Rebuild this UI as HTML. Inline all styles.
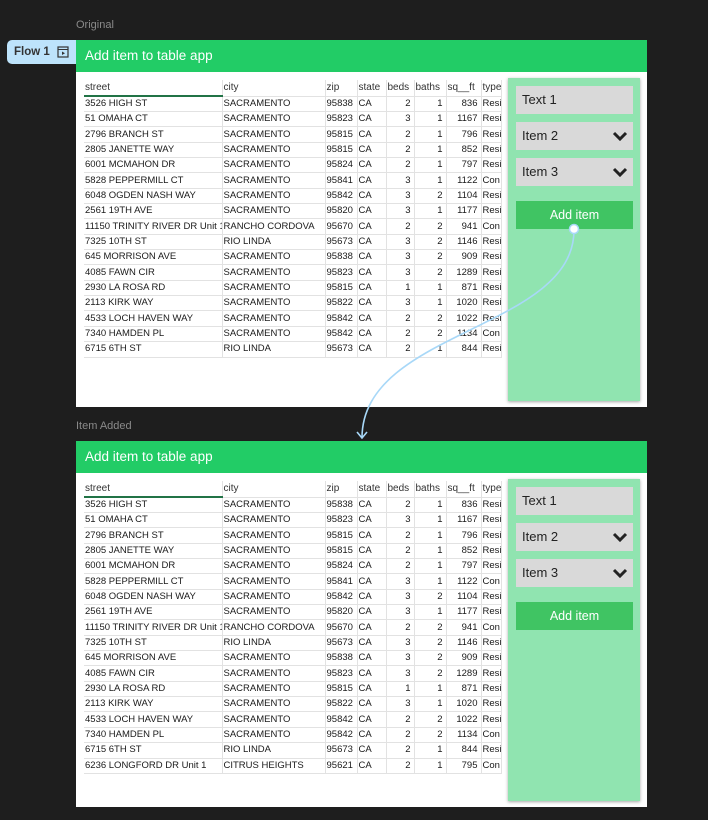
<!DOCTYPE html>
<html><head><meta charset="utf-8"><style>
*{margin:0;padding:0;box-sizing:border-box}
body{width:708px;height:820px;background:#1e1e1e;position:relative;overflow:hidden;font-family:"Liberation Sans",sans-serif}
.lbl{position:absolute;left:76px;font-size:11px;color:#8a8a8a}
.frame{position:absolute;left:76px;width:571px;background:#fff}
.hdr{height:32px;background:#22cc66;color:#fff;font-size:13.5px;line-height:32px;padding-left:9px}
table{position:absolute;left:8px;width:417px;border-collapse:collapse;table-layout:fixed;font-size:9.5px;color:#1a1a1a;font-family:"Liberation Sans",sans-serif}
td{height:15.35px;border-right:1px solid #e2e2e2;border-bottom:1px solid #e2e2e2;white-space:nowrap;overflow:hidden;padding:0 1px;line-height:14px}
tr.h td{height:16px;color:#333;font-size:10px}
td.n{text-align:right;padding-right:3px}
.panel{position:absolute;left:432px;width:132px;background:#90e4b0;box-shadow:0 1px 3px rgba(0,0,0,.35)}
.f{position:absolute;left:8px;width:117px;height:28px;background:#d9d9d9;font-size:13px;color:#222;line-height:28px;padding-left:6px}
.f svg{position:absolute;right:5px;top:9px}
.btn{position:absolute;left:8px;width:117px;height:28px;background:#40c463;color:#fff;font-size:12.5px;line-height:28px;text-align:center}
.flow{position:absolute;left:7px;top:40px;width:69px;height:24px;background:#bde3fb;border-radius:5px 0 0 5px;font-size:11.5px;font-weight:bold;color:#333;line-height:24px;padding-left:7px}
</style></head><body>
<div class="lbl" style="top:19px">Original</div>
<div class="flow">Flow 1<svg style="position:absolute;left:50px;top:6px" width="12" height="12" viewBox="0 0 12 12"><rect x="1" y="1" width="10" height="10" fill="none" stroke="#333" stroke-width="1.2"/><line x1="1" y1="3.5" x2="11" y2="3.5" stroke="#333"/><path d="M5 5.5v3.5l3-1.75z" fill="#333"/></svg></div>

<div class="frame" style="top:40px;height:367px">
<div class="hdr">Add item to table app</div>
<table style="top:40px">
<colgroup><col style="width:138px"><col style="width:103px"><col style="width:32px"><col style="width:29px"><col style="width:28px"><col style="width:32px"><col style="width:35px"><col style="width:20px"></colgroup>
<tr class="h"><td style="border-bottom:2px solid #217346">street</td><td>city</td><td>zip</td><td>state</td><td>beds</td><td>baths</td><td>sq__ft</td><td>type</td></tr>
<tr><td>3526 HIGH ST</td><td>SACRAMENTO</td><td>95838</td><td>CA</td><td class="n">2</td><td class="n">1</td><td class="n">836</td><td>Resi</td></tr>
<tr><td>51 OMAHA CT</td><td>SACRAMENTO</td><td>95823</td><td>CA</td><td class="n">3</td><td class="n">1</td><td class="n">1167</td><td>Resi</td></tr>
<tr><td>2796 BRANCH ST</td><td>SACRAMENTO</td><td>95815</td><td>CA</td><td class="n">2</td><td class="n">1</td><td class="n">796</td><td>Resi</td></tr>
<tr><td>2805 JANETTE WAY</td><td>SACRAMENTO</td><td>95815</td><td>CA</td><td class="n">2</td><td class="n">1</td><td class="n">852</td><td>Resi</td></tr>
<tr><td>6001 MCMAHON DR</td><td>SACRAMENTO</td><td>95824</td><td>CA</td><td class="n">2</td><td class="n">1</td><td class="n">797</td><td>Resi</td></tr>
<tr><td>5828 PEPPERMILL CT</td><td>SACRAMENTO</td><td>95841</td><td>CA</td><td class="n">3</td><td class="n">1</td><td class="n">1122</td><td>Con</td></tr>
<tr><td>6048 OGDEN NASH WAY</td><td>SACRAMENTO</td><td>95842</td><td>CA</td><td class="n">3</td><td class="n">2</td><td class="n">1104</td><td>Resi</td></tr>
<tr><td>2561 19TH AVE</td><td>SACRAMENTO</td><td>95820</td><td>CA</td><td class="n">3</td><td class="n">1</td><td class="n">1177</td><td>Resi</td></tr>
<tr><td>11150 TRINITY RIVER DR Unit 114</td><td>RANCHO CORDOVA</td><td>95670</td><td>CA</td><td class="n">2</td><td class="n">2</td><td class="n">941</td><td>Con</td></tr>
<tr><td>7325 10TH ST</td><td>RIO LINDA</td><td>95673</td><td>CA</td><td class="n">3</td><td class="n">2</td><td class="n">1146</td><td>Resi</td></tr>
<tr><td>645 MORRISON AVE</td><td>SACRAMENTO</td><td>95838</td><td>CA</td><td class="n">3</td><td class="n">2</td><td class="n">909</td><td>Resi</td></tr>
<tr><td>4085 FAWN CIR</td><td>SACRAMENTO</td><td>95823</td><td>CA</td><td class="n">3</td><td class="n">2</td><td class="n">1289</td><td>Resi</td></tr>
<tr><td>2930 LA ROSA RD</td><td>SACRAMENTO</td><td>95815</td><td>CA</td><td class="n">1</td><td class="n">1</td><td class="n">871</td><td>Resi</td></tr>
<tr><td>2113 KIRK WAY</td><td>SACRAMENTO</td><td>95822</td><td>CA</td><td class="n">3</td><td class="n">1</td><td class="n">1020</td><td>Resi</td></tr>
<tr><td>4533 LOCH HAVEN WAY</td><td>SACRAMENTO</td><td>95842</td><td>CA</td><td class="n">2</td><td class="n">2</td><td class="n">1022</td><td>Resi</td></tr>
<tr><td>7340 HAMDEN PL</td><td>SACRAMENTO</td><td>95842</td><td>CA</td><td class="n">2</td><td class="n">2</td><td class="n">1134</td><td>Con</td></tr>
<tr><td>6715 6TH ST</td><td>RIO LINDA</td><td>95673</td><td>CA</td><td class="n">2</td><td class="n">1</td><td class="n">844</td><td>Resi</td></tr>
</table>
<div class="panel" style="top:38px;height:323px">
<div class="f" style="top:8px">Text 1</div>
<div class="f" style="top:44px">Item 2<svg width="16" height="10" viewBox="0 0 16 10"><path d="M2 2l6 6 6-6" fill="none" stroke="#222" stroke-width="3"/></svg></div>
<div class="f" style="top:80px">Item 3<svg width="16" height="10" viewBox="0 0 16 10"><path d="M2 2l6 6 6-6" fill="none" stroke="#222" stroke-width="3"/></svg></div>
<div class="btn" style="top:123px">Add item</div>
</div>
</div>

<div class="lbl" style="top:420px">Item Added</div>
<div class="frame" style="top:441px;height:366px">
<div class="hdr">Add item to table app</div>
<table style="top:40px">
<colgroup><col style="width:138px"><col style="width:103px"><col style="width:32px"><col style="width:29px"><col style="width:28px"><col style="width:32px"><col style="width:35px"><col style="width:20px"></colgroup>
<tr class="h"><td style="border-bottom:2px solid #217346">street</td><td>city</td><td>zip</td><td>state</td><td>beds</td><td>baths</td><td>sq__ft</td><td>type</td></tr>
<tr><td>3526 HIGH ST</td><td>SACRAMENTO</td><td>95838</td><td>CA</td><td class="n">2</td><td class="n">1</td><td class="n">836</td><td>Resi</td></tr>
<tr><td>51 OMAHA CT</td><td>SACRAMENTO</td><td>95823</td><td>CA</td><td class="n">3</td><td class="n">1</td><td class="n">1167</td><td>Resi</td></tr>
<tr><td>2796 BRANCH ST</td><td>SACRAMENTO</td><td>95815</td><td>CA</td><td class="n">2</td><td class="n">1</td><td class="n">796</td><td>Resi</td></tr>
<tr><td>2805 JANETTE WAY</td><td>SACRAMENTO</td><td>95815</td><td>CA</td><td class="n">2</td><td class="n">1</td><td class="n">852</td><td>Resi</td></tr>
<tr><td>6001 MCMAHON DR</td><td>SACRAMENTO</td><td>95824</td><td>CA</td><td class="n">2</td><td class="n">1</td><td class="n">797</td><td>Resi</td></tr>
<tr><td>5828 PEPPERMILL CT</td><td>SACRAMENTO</td><td>95841</td><td>CA</td><td class="n">3</td><td class="n">1</td><td class="n">1122</td><td>Con</td></tr>
<tr><td>6048 OGDEN NASH WAY</td><td>SACRAMENTO</td><td>95842</td><td>CA</td><td class="n">3</td><td class="n">2</td><td class="n">1104</td><td>Resi</td></tr>
<tr><td>2561 19TH AVE</td><td>SACRAMENTO</td><td>95820</td><td>CA</td><td class="n">3</td><td class="n">1</td><td class="n">1177</td><td>Resi</td></tr>
<tr><td>11150 TRINITY RIVER DR Unit 114</td><td>RANCHO CORDOVA</td><td>95670</td><td>CA</td><td class="n">2</td><td class="n">2</td><td class="n">941</td><td>Con</td></tr>
<tr><td>7325 10TH ST</td><td>RIO LINDA</td><td>95673</td><td>CA</td><td class="n">3</td><td class="n">2</td><td class="n">1146</td><td>Resi</td></tr>
<tr><td>645 MORRISON AVE</td><td>SACRAMENTO</td><td>95838</td><td>CA</td><td class="n">3</td><td class="n">2</td><td class="n">909</td><td>Resi</td></tr>
<tr><td>4085 FAWN CIR</td><td>SACRAMENTO</td><td>95823</td><td>CA</td><td class="n">3</td><td class="n">2</td><td class="n">1289</td><td>Resi</td></tr>
<tr><td>2930 LA ROSA RD</td><td>SACRAMENTO</td><td>95815</td><td>CA</td><td class="n">1</td><td class="n">1</td><td class="n">871</td><td>Resi</td></tr>
<tr><td>2113 KIRK WAY</td><td>SACRAMENTO</td><td>95822</td><td>CA</td><td class="n">3</td><td class="n">1</td><td class="n">1020</td><td>Resi</td></tr>
<tr><td>4533 LOCH HAVEN WAY</td><td>SACRAMENTO</td><td>95842</td><td>CA</td><td class="n">2</td><td class="n">2</td><td class="n">1022</td><td>Resi</td></tr>
<tr><td>7340 HAMDEN PL</td><td>SACRAMENTO</td><td>95842</td><td>CA</td><td class="n">2</td><td class="n">2</td><td class="n">1134</td><td>Con</td></tr>
<tr><td>6715 6TH ST</td><td>RIO LINDA</td><td>95673</td><td>CA</td><td class="n">2</td><td class="n">1</td><td class="n">844</td><td>Resi</td></tr>
<tr><td>6236 LONGFORD DR Unit 1</td><td>CITRUS HEIGHTS</td><td>95621</td><td>CA</td><td class="n">2</td><td class="n">1</td><td class="n">795</td><td>Con</td></tr>
</table>
<div class="panel" style="top:38px;height:322px">
<div class="f" style="top:8px">Text 1</div>
<div class="f" style="top:44px">Item 2<svg width="16" height="10" viewBox="0 0 16 10"><path d="M2 2l6 6 6-6" fill="none" stroke="#222" stroke-width="3"/></svg></div>
<div class="f" style="top:80px">Item 3<svg width="16" height="10" viewBox="0 0 16 10"><path d="M2 2l6 6 6-6" fill="none" stroke="#222" stroke-width="3"/></svg></div>
<div class="btn" style="top:123px">Add item</div>
</div>
</div>

<svg style="position:absolute;left:0;top:0" width="708" height="820">
<path d="M574 230 C574 330 362 330 362 438" fill="none" stroke="#a8d8f8" stroke-width="1.6"/>
<path d="M357 432 L362 438 L367 432" fill="none" stroke="#a8d8f8" stroke-width="1.6"/>
<circle cx="574" cy="229" r="4.5" fill="#fff" stroke="#a8d8f8" stroke-width="1.5"/>
</svg>
</body></html>
